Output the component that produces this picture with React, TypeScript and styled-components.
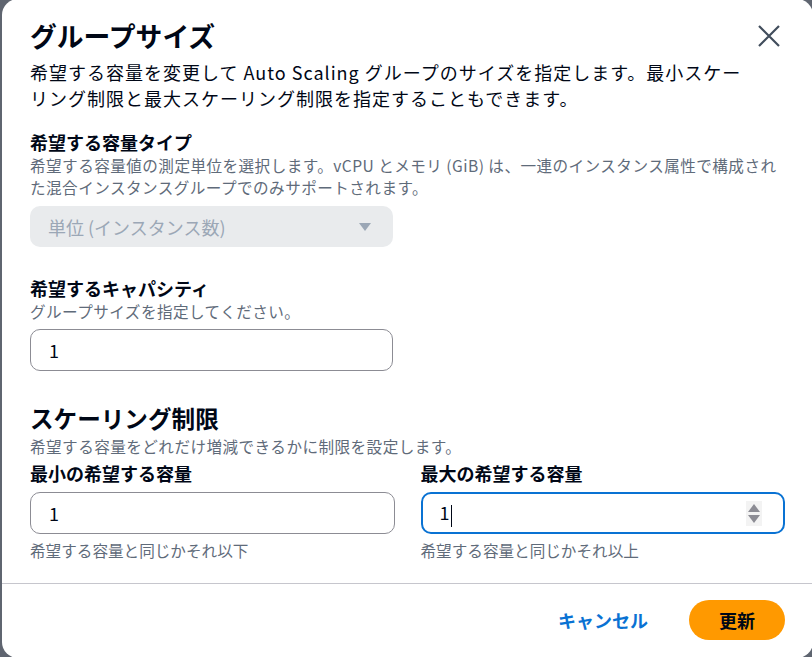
import * as React from 'react'
import styled, { createGlobalStyle } from 'styled-components'

const TEXT = '#000716'
const MUTED = '#5f6b7a'
const BLUE = '#0972d3'

const Global = createGlobalStyle`
	html, body {
		margin: 0;
		padding: 0;
		background: #5f6570;
		font-family: "Noto Sans CJK JP", "Noto Sans", sans-serif;
		color: ${TEXT};
	}
	* { box-sizing: border-box; }
`

const Backdrop = styled.div`
	height: 657px;
	overflow: hidden;
	padding-left: 2px;
`

const Dialog = styled.div`
	width: 811px;
	height: 659px;
	margin-top: -1px;
	background: #ffffff;
	border-radius: 16px;
	display: flex;
	flex-direction: column;
`

const Header = styled.header`
	padding: 21px 28px 0 28px;
`

const TitleRow = styled.div`
	display: flex;
	justify-content: space-between;
	align-items: center;
`

const Title = styled.h2`
	margin: 0;
	font-size: 26.8px;
	line-height: 32px;
	font-weight: 700;
`

const CloseButton = styled.button`
	border: 0;
	background: none;
	padding: 0;
	width: 32px;
	height: 32px;
	display: flex;
	align-items: center;
	justify-content: center;
	color: #414d5c;
`

const Intro = styled.p`
	margin: 7px 0 0 0;
	font-size: 18px;
	line-height: 26px;
	letter-spacing: 1px;
	max-width: 712px;
`

const Body = styled.div`
	flex: 1;
	padding: 0 28px;
`

const Field = styled.div<{ $top: number }>`
	margin-top: ${p => p.$top}px;
`

const Label = styled.div`
	font-size: 18px;
	line-height: 24px;
	font-weight: 700;
`

const Hint = styled.div<{ $gap?: number }>`
	font-size: 15.6px;
	line-height: 22px;
	letter-spacing: 0.45px;
	color: ${MUTED};
	margin-top: ${p => p.$gap ?? 0}px;
`

const Select = styled.div`
	margin-top: 8px;
	width: 363px;
	height: 41px;
	border-radius: 10px;
	background: #e9ebed;
	color: #9ba7b6;
	font-size: 18px;
	display: flex;
	align-items: center;
	justify-content: space-between;
	padding: 0 22px 0 18px;
`

const Input = styled.div<{ $focused?: boolean; $width?: string }>`
	margin-top: 7px;
	width: ${p => p.$width ?? '100%'};
	height: 42px;
	border-radius: 10px;
	border: ${p => (p.$focused ? `2px solid ${BLUE}` : '1px solid #8c8c94')};
	padding: 0 ${p => (p.$focused ? 17 : 18)}px;
	font-size: 18px;
	display: flex;
	align-items: center;
	justify-content: space-between;
	background: #ffffff;
`

const Caret = styled.span`
	display: inline-block;
	width: 1px;
	height: 22px;
	background: ${TEXT};
	vertical-align: middle;
	margin-left: 1px;
`

const Spinner = styled.span`
	display: flex;
	flex-direction: column;
	gap: 3px;
	align-items: center;
	padding: 3px 2px;
	background: #f3f3f3;
	margin-right: 4px;
`

const SectionTitle = styled.h3`
	margin: 32px 0 0 0;
	font-size: 23.6px;
	line-height: 30px;
	font-weight: 700;
`

const Columns = styled.div`
	display: grid;
	grid-template-columns: 1fr 1fr;
	column-gap: 26px;
	margin-top: 4px;
`

const Constraint = styled.div`
	margin-top: 6px;
	font-size: 15.6px;
	line-height: 20px;
	color: ${MUTED};
`

const Footer = styled.footer`
	border-top: 1px solid #c6c6cd;
	padding: 16px 28px 0 28px;
	height: 75px;
	display: flex;
	justify-content: flex-end;
	align-items: flex-start;
	gap: 20px;
`

const Button = styled.button<{ $primary?: boolean }>`
	height: 40px;
	border: 0;
	border-radius: 20px;
	font-family: inherit;
	font-size: 18px;
	font-weight: 700;
	padding: 0 ${p => (p.$primary ? 30 : 21)}px;
	background: ${p => (p.$primary ? '#ff9900' : 'transparent')};
	color: ${p => (p.$primary ? TEXT : BLUE)};
`

const Triangle = ({ up, color }: { up?: boolean; color: string }) => (
	<svg width="12" height="8" viewBox="0 0 12 8">
		<polygon points={up ? '6,0 12,8 0,8' : '0,0 12,0 6,8'} fill={color} />
	</svg>
)

export default function App() {
	return (
		<>
			<Global />
			<Backdrop>
				<Dialog>
					<Header>
						<TitleRow>
							<Title>グループサイズ</Title>
							<CloseButton aria-label="閉じる">
								<svg width="24" height="24" viewBox="0 0 24 24">
									<path d="M2 2 L22 22 M22 2 L2 22" stroke="currentColor" strokeWidth="2.2" fill="none" />
								</svg>
							</CloseButton>
						</TitleRow>
						<Intro>
							希望する容量を変更して Auto Scaling グループのサイズを指定します。最小スケーリング制限と最大スケーリング制限を指定することもできます。
						</Intro>
					</Header>

					<Body>
						<Field $top={19}>
							<Label>希望する容量タイプ</Label>
							<Hint>
								希望する容量値の測定単位を選択します。vCPU とメモリ (GiB) は、一連のインスタンス属性で構成された混合インスタンスグループでのみサポートされます。
							</Hint>
							<Select>
								<span>単位 (インスタンス数)</span>
								<Triangle color="#9ba7b6" />
							</Select>
						</Field>

						<Field $top={29}>
							<Label>希望するキャパシティ</Label>
							<Hint>グループサイズを指定してください。</Hint>
							<Input $width="363px">1</Input>
						</Field>

						<SectionTitle>スケーリング制限</SectionTitle>
						<Hint $gap={2}>希望する容量をどれだけ増減できるかに制限を設定します。</Hint>
						<Columns>
							<div>
								<Label>最小の希望する容量</Label>
								<Input>1</Input>
								<Constraint>希望する容量と同じかそれ以下</Constraint>
							</div>
							<div>
								<Label>最大の希望する容量</Label>
								<Input $focused>
									<span>
										1<Caret />
									</span>
									<Spinner>
										<Triangle up color="#8c8c94" />
										<Triangle color="#8c8c94" />
									</Spinner>
								</Input>
								<Constraint>希望する容量と同じかそれ以上</Constraint>
							</div>
						</Columns>
					</Body>

					<Footer>
						<Button>キャンセル</Button>
						<Button $primary>更新</Button>
					</Footer>
				</Dialog>
			</Backdrop>
		</>
	)
}
